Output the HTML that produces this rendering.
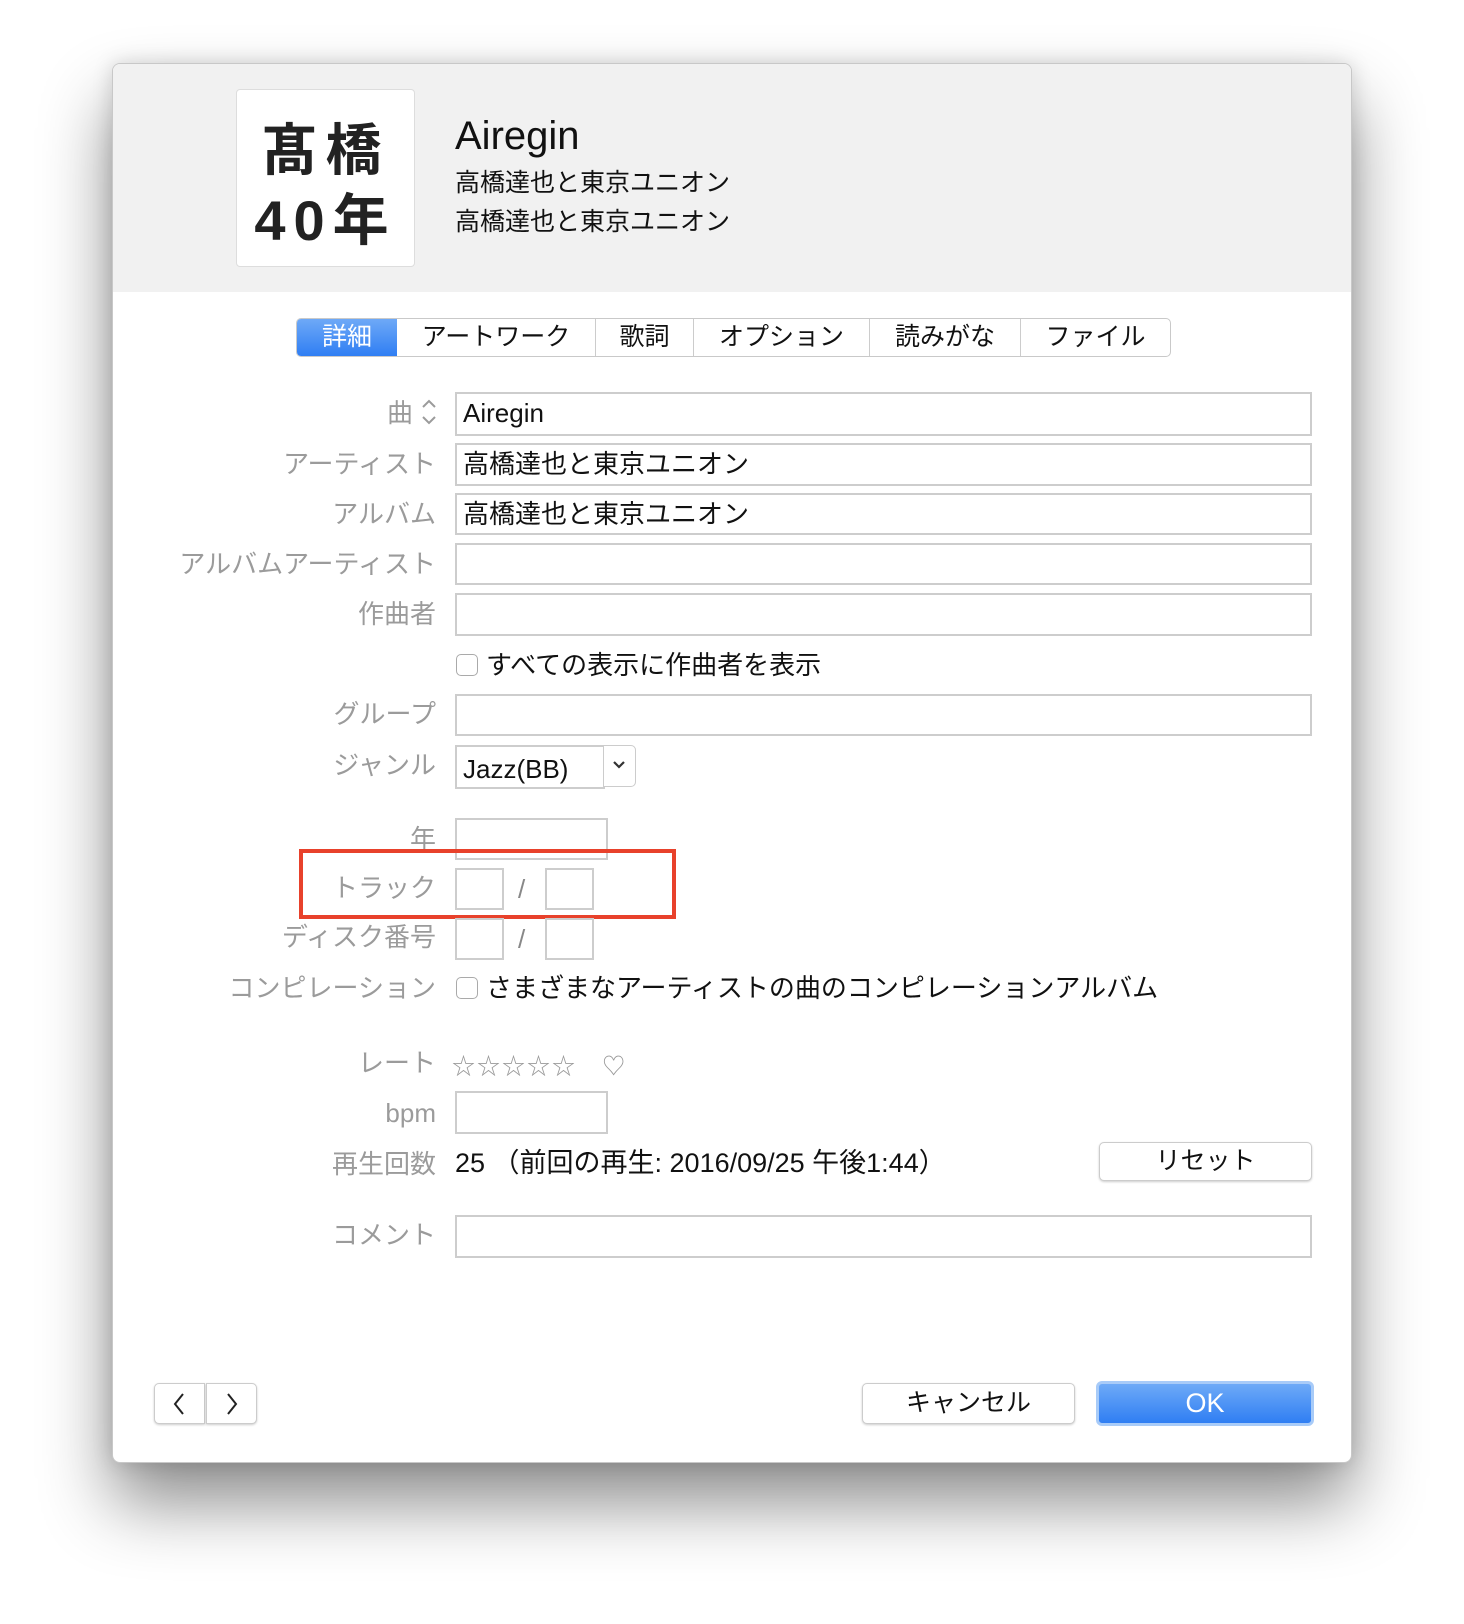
<!DOCTYPE html>
<html><head><meta charset="utf-8"><style>
*{margin:0;padding:0;box-sizing:border-box}
body{width:1464px;height:1624px;background:#fff;position:relative;overflow:hidden;font-family:"Liberation Sans","Noto Sans CJK JP",sans-serif}
.win{position:absolute;left:112px;top:63px;width:1240px;height:1400px;background:#fff;border:1px solid #c8c8c8;border-radius:8px;box-shadow:0 40px 70px rgba(0,0,0,.45),0 0 20px rgba(0,0,0,.15);overflow:hidden}
.hdr{position:absolute;left:0;top:0;width:100%;height:228px;background:#f1f1f1}
.a{position:absolute}
.art{left:123px;top:25px;width:179px;height:178px;background:#fff;border:1px solid #ddd;border-radius:4px}
.art div{position:absolute;left:0;width:100%;text-align:center;font-size:56px;font-weight:bold;color:#222;letter-spacing:8px}
.lbl{position:absolute;right:0;width:340px;text-align:right;color:#9b9b9b;font-size:26px;line-height:30px}
.in{position:absolute;border:2px solid #cdcdcd;background:#fff;font-size:26px;color:#111;padding-left:6px;line-height:38px}
.t{position:absolute;font-size:26px;color:#111;line-height:30px}
.cb{position:absolute;width:22px;height:22px;border:1.5px solid #aaa;border-radius:5px;background:#fff}
.btn{position:absolute;background:#fff;border:1px solid #ccc;border-radius:5px;box-shadow:0 1px 2px rgba(0,0,0,.2);text-align:center;font-size:25px;color:#111}
</style></head><body>
<div class="win">
<div class="hdr"></div>
<div class="a art"><div style="top:16px">髙橋</div><div style="top:86px">40年</div></div>
<div class="a" style="left:342px;top:50px;font-size:40px;color:#111">Airegin</div>
<div class="a" style="left:342px;top:99px;font-size:25px;color:#111">高橋達也と東京ユニオン</div>
<div class="a" style="left:342px;top:138px;font-size:25px;color:#111">高橋達也と東京ユニオン</div>
<div class="a" style="left:183px;top:254px;width:875px;height:39px;border:1px solid #c9c9c9;border-radius:5px;background:#fff;display:flex;font-size:25px;color:#111;overflow:hidden">
<div style="width:100px;background:linear-gradient(#6ea9f7,#2f7ef3);color:#fff;text-align:center;line-height:37px">詳細</div>
<div style="width:199px;text-align:center;line-height:37px;border-right:1px solid #ccc">アートワーク</div>
<div style="width:98px;text-align:center;line-height:37px;border-right:1px solid #ccc">歌詞</div>
<div style="width:176px;text-align:center;line-height:37px;border-right:1px solid #ccc">オプション</div>
<div style="width:151px;text-align:center;line-height:37px;border-right:1px solid #ccc">読みがな</div>
<div style="flex:1;text-align:center;line-height:37px">ファイル</div>
</div>
<div class="lbl" style="right:938px;top:334px">曲</div>
<svg class="a" style="left:308px;top:334px" width="16" height="28" viewBox="0 0 16 28"><path d="M2 9 L8 3 L14 9 M2 19 L8 25 L14 19" stroke="#9b9b9b" stroke-width="2" fill="none"/></svg>
<div class="in" style="left:342px;top:328px;width:857px;height:44px">Airegin</div>
<div class="lbl" style="right:915px;top:385px">アーティスト</div>
<div class="in" style="left:342px;top:379px;width:857px;height:43px">高橋達也と東京ユニオン</div>
<div class="lbl" style="right:915px;top:435px">アルバム</div>
<div class="in" style="left:342px;top:429px;width:857px;height:42px">高橋達也と東京ユニオン</div>
<div class="lbl" style="right:915px;top:485px">アルバムアーティスト</div>
<div class="in" style="left:342px;top:479px;width:857px;height:42px"></div>
<div class="lbl" style="right:915px;top:535px">作曲者</div>
<div class="in" style="left:342px;top:529px;width:857px;height:43px"></div>
<div class="cb" style="left:343px;top:590px"></div>
<div class="t" style="left:373px;top:586px">すべての表示に作曲者を表示</div>
<div class="lbl" style="right:915px;top:635px">グループ</div>
<div class="in" style="left:342px;top:630px;width:857px;height:42px"></div>
<div class="lbl" style="right:915px;top:686px">ジャンル</div>
<div class="in" style="left:342px;top:681px;width:150px;height:44px;line-height:44px">Jazz(BB)</div>
<div class="a" style="left:490px;top:681px;width:33px;height:42px;border:1px solid #ccc;border-radius:0 5px 5px 0;background:#fff"></div>
<svg class="a" style="left:498px;top:694px" width="16" height="14" viewBox="0 0 16 14"><path d="M3 4 L8 9 L13 4" stroke="#333" stroke-width="2.2" fill="none"/></svg>
<div class="lbl" style="right:915px;top:760px">年</div>
<div class="in" style="left:342px;top:754px;width:153px;height:42px"></div>
<div class="lbl" style="right:915px;top:809px">トラック</div>
<div class="in" style="left:342px;top:804px;width:49px;height:42px"></div>
<div class="t" style="left:405px;top:810px;color:#888">/</div>
<div class="in" style="left:432px;top:804px;width:49px;height:42px"></div>
<div class="a" style="left:186px;top:785px;width:377px;height:70px;border:4px solid #e8412b"></div>
<div class="lbl" style="right:915px;top:858px">ディスク番号</div>
<div class="in" style="left:342px;top:854px;width:49px;height:42px"></div>
<div class="t" style="left:405px;top:860px;color:#888">/</div>
<div class="in" style="left:432px;top:854px;width:49px;height:42px"></div>
<div class="lbl" style="right:915px;top:909px">コンピレーション</div>
<div class="cb" style="left:343px;top:913px"></div>
<div class="t" style="left:373px;top:909px">さまざまなアーティストの曲のコンピレーションアルバム</div>
<div class="lbl" style="right:915px;top:984px">レート</div>
<div class="a" style="left:339px;top:983px;font-size:23px;color:#999;letter-spacing:2px">☆☆☆☆☆ &nbsp;&nbsp;♡</div>
<div class="lbl" style="right:915px;top:1034px">bpm</div>
<div class="in" style="left:342px;top:1027px;width:153px;height:43px"></div>
<div class="lbl" style="right:915px;top:1085px">再生回数</div>
<div class="t" style="left:342px;top:1084px;font-size:27px">25 （前回の再生: 2016/09/25 午後1:44）</div>
<div class="btn" style="left:986px;top:1078px;width:213px;height:39px;line-height:37px">リセット</div>
<div class="lbl" style="right:915px;top:1156px">コメント</div>
<div class="in" style="left:342px;top:1151px;width:857px;height:43px"></div>
<div class="btn" style="left:41px;top:1319px;width:51px;height:41px;border-radius:5px 0 0 5px"></div>
<div class="btn" style="left:93px;top:1319px;width:51px;height:41px;border-radius:0 5px 5px 0"></div>
<svg class="a" style="left:58px;top:1328px" width="16" height="24" viewBox="0 0 16 24"><path d="M12 2 L4 12 L12 22" stroke="#222" stroke-width="2" fill="none"/></svg>
<svg class="a" style="left:111px;top:1328px" width="16" height="24" viewBox="0 0 16 24"><path d="M4 2 L12 12 L4 22" stroke="#222" stroke-width="2" fill="none"/></svg>
<div class="btn" style="left:749px;top:1319px;width:213px;height:41px;line-height:39px">キャンセル</div>
<div class="a" style="left:983px;top:1317px;width:218px;height:45px;border-radius:6px;background:linear-gradient(#6eaaf7,#2f7ef3);border:3px solid #a8cbf8;color:#fff;font-size:27px;text-align:center;line-height:39px">OK</div>
</div>
</body></html>
